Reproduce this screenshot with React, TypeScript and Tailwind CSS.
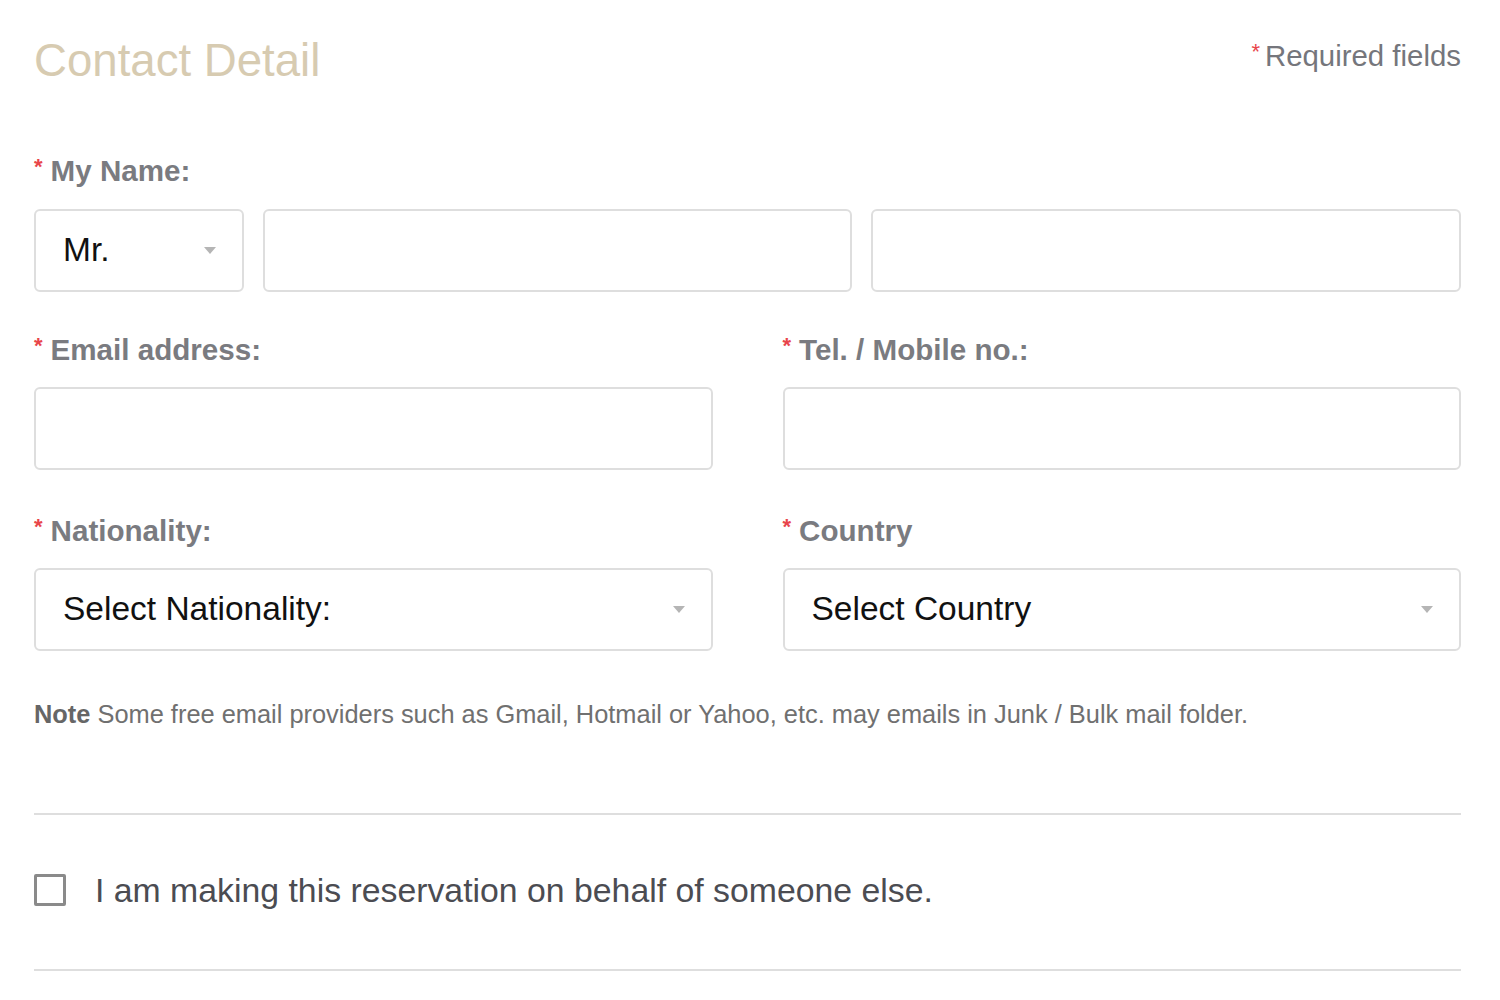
import React from 'react';

const Label: React.FC<{ text: string }> = ({ text }) => (
  <div className="flex items-start h-[34px] text-[29.6px] leading-[34px] font-bold text-[#7a7b80]">
    <span className="text-[22px] leading-[22px] text-[#e8454b] mt-[2px] mr-[8px]">*</span>
    <span>{text}</span>
  </div>
);

const Caret: React.FC = () => (
  <svg width="12" height="7" viewBox="0 0 12 7" className="shrink-0">
    <path d="M0 0 L12 0 L6 7 Z" fill="#b5b5b5" />
  </svg>
);

const SelectBox: React.FC<{ value: string; className?: string }> = ({ value, className }) => (
  <div
    className={`h-[83px] flex items-center justify-between pl-[27px] pr-[26px] border-2 border-[#dedede] rounded-[6px] bg-white ${className ?? ''}`}
  >
    <span className="text-[33.5px] text-[#111]">{value}</span>
    <Caret />
  </div>
);

const TextBox: React.FC<{ className?: string }> = ({ className }) => (
  <div className={`h-[83px] border-2 border-[#dedede] rounded-[6px] bg-white ${className ?? ''}`} />
);

const App: React.FC = () => {
  return (
    <div className="w-[1500px] min-h-[1000px] bg-white pl-[34px] pr-[39px] pt-[35px] font-['Liberation_Sans',Arial,sans-serif]">
      <div className="flex justify-between items-start">
        <h1 className="text-[45.6px] leading-[52px] text-[#d7cbb1] font-normal">Contact Detail</h1>
        <div className="mt-[4px] flex items-start text-[29.4px] leading-[34px] text-[#75767c]">
          <span className="text-[22px] leading-[22px] text-[#e8454b] mt-[2px] mr-[5px]">*</span>
          <span>Required fields</span>
        </div>
      </div>

      <div className="mt-[67px]">
        <Label text="My Name:" />
        <div className="mt-[21px] flex gap-[19px]">
          <SelectBox value="Mr." className="w-[210px]" />
          <TextBox className="w-[589px]" />
          <TextBox className="flex-1" />
        </div>
      </div>

      <div className="mt-[41px] grid grid-cols-2 gap-x-[70px]">
        <div>
          <Label text="Email address:" />
          <TextBox className="mt-[20px]" />
        </div>
        <div>
          <Label text="Tel. / Mobile no.:" />
          <TextBox className="mt-[20px]" />
        </div>
      </div>

      <div className="mt-[44px] grid grid-cols-2 gap-x-[70px]">
        <div>
          <Label text="Nationality:" />
          <SelectBox value="Select Nationality:" className="mt-[20px]" />
        </div>
        <div>
          <Label text="Country" />
          <SelectBox value="Select Country" className="mt-[20px]" />
        </div>
      </div>

      <p className="mt-[48px] text-[25.4px] leading-[30px] text-[#707070]">
        <span className="font-bold text-[#666]">Note</span> Some free email providers such as Gmail, Hotmail or Yahoo, etc. may emails in Junk / Bulk mail folder.
      </p>

      <div className="mt-[84px] h-[2px] bg-[#dedede]" />

      <label className="mt-[55px] flex items-center h-[40px]">
        <span className="w-[32px] h-[32px] border-[3px] border-[#8a8a8a] rounded-[2px] bg-white" />
        <span className="ml-[29px] text-[33.8px] leading-[40px] text-[#4b4c52]">
          I am making this reservation on behalf of someone else.
        </span>
      </label>

      <div className="mt-[59px] h-[2px] bg-[#dedede]" />
    </div>
  );
};

export default App;
